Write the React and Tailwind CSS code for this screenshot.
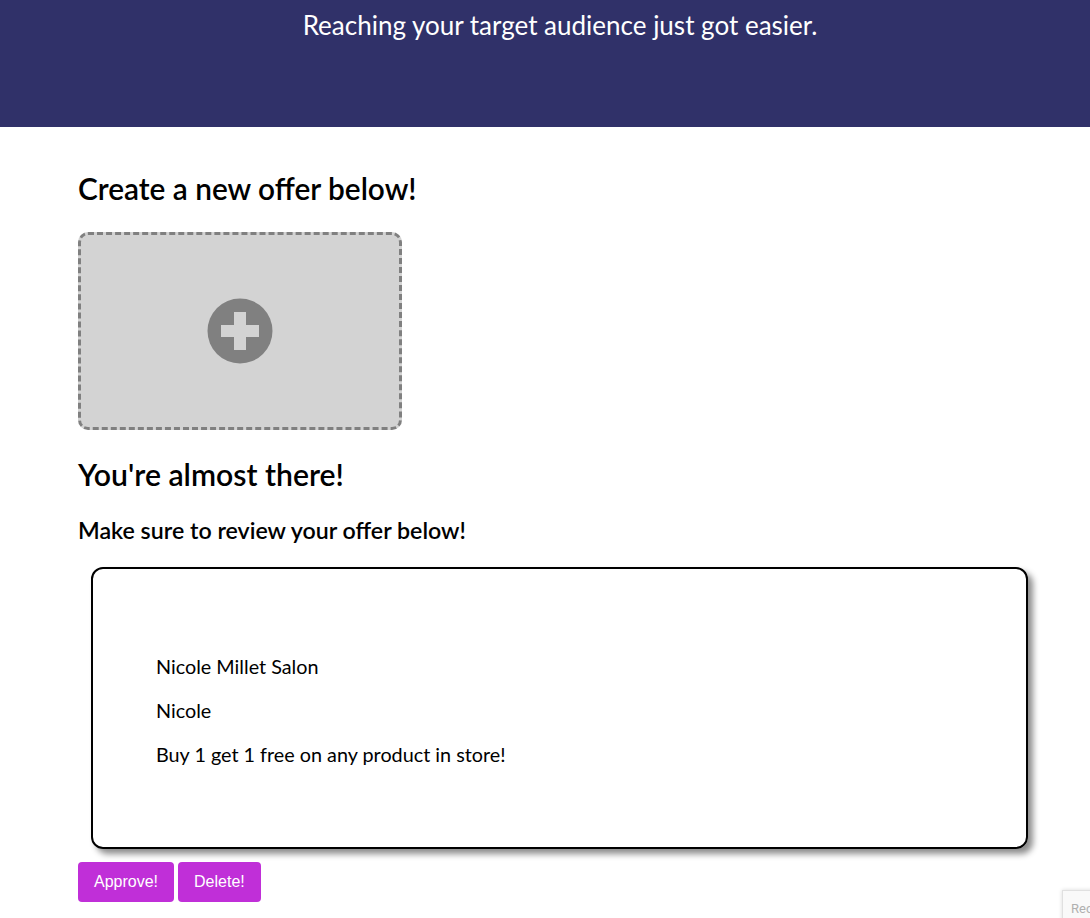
export default function App() {
    return (
        <div className="min-h-[918px] bg-white font-['Lato','Liberation_Sans',sans-serif] text-black relative overflow-hidden">
            {/* header */}
            <div className="bg-[#303169] h-[127px] pt-[8px] pl-[30px]">
                <p className="text-center text-white text-[26px] leading-[34px]">Reaching your target audience just got easier.</p>
            </div>

            <div className="pl-[78px] pr-[62px]">
                <h1 className="text-[29.8px] font-semibold mt-[44px] leading-[36px]">Create a new offer below!</h1>

                {/* add offer tile */}
                <button className="mt-[25px] w-[324px] h-[198px] bg-[#d3d3d3] border-[3px] border-dashed border-[#808080] rounded-[10px] flex items-center justify-center">
                    <svg width="66" height="66" viewBox="0 0 66 66">
                        <circle cx="33" cy="33" r="32.5" fill="#808080" />
                        <path d="M27 14h12v13h13v12H39v13H27V39H14V27h13z" fill="#d3d3d3" />
                    </svg>
                </button>

                <h2 className="text-[30.2px] font-semibold mt-[26px] leading-[36px]">You're almost there!</h2>
                <h3 className="text-[23.2px] font-semibold mt-[24px] leading-[28px]">Make sure to review your offer below!</h3>

                {/* review card */}
                <div className="mt-[23px] ml-[13px] h-[282px] border-2 border-black rounded-[12px] shadow-[5px_5px_6px_rgba(0,0,0,0.45)] pl-[63px] pt-[83px] text-[19.8px]">
                    <p className="leading-[28px]">Nicole Millet Salon</p>
                    <p className="leading-[28px] mt-[16px]">Nicole</p>
                    <p className="leading-[28px] mt-[16px]">Buy 1 get 1 free on any product in store!</p>
                </div>

                <div className="flex gap-[4px] mt-[13px]">
                    <button className="bg-[#c02fd8] text-white font-['Liberation_Sans',Arial,sans-serif] text-[16px] h-[40px] px-[16px] rounded-[4px]">Approve!</button>
                    <button className="bg-[#c02fd8] text-white font-['Liberation_Sans',Arial,sans-serif] text-[16px] h-[40px] px-[16px] rounded-[4px]">Delete!</button>
                </div>
            </div>

            {/* recaptcha badge peeking in */}
            <div className="absolute left-[1062px] top-[890px] w-[256px] h-[60px] border border-[#e0e0e0] bg-[#f9f9f9] shadow-[0_0_4px_rgba(0,0,0,0.15)] pl-[8px] pt-[8px] text-[13px] text-[#b0b0b0] font-['Roboto',sans-serif]">
                Recaptcha
            </div>
        </div>
    )
}
